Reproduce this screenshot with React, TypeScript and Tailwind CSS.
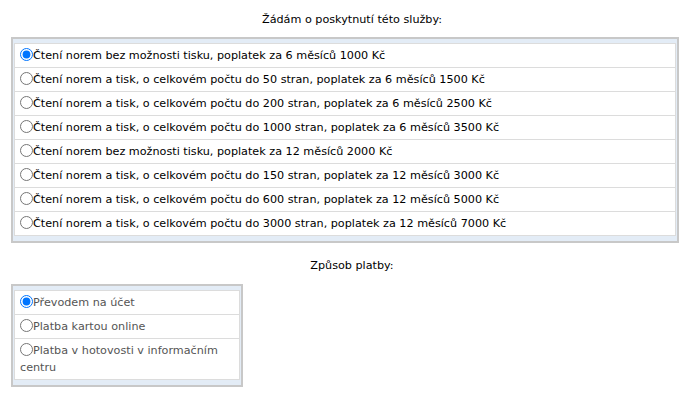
const SERVICES = [
  "Čtení norem bez možnosti tisku, poplatek za 6 měsíců 1000 Kč",
  "Čtení norem a tisk, o celkovém počtu do 50 stran, poplatek za 6 měsíců 1500 Kč",
  "Čtení norem a tisk, o celkovém počtu do 200 stran, poplatek za 6 měsíců 2500 Kč",
  "Čtení norem a tisk, o celkovém počtu do 1000 stran, poplatek za 6 měsíců 3500 Kč",
  "Čtení norem bez možnosti tisku, poplatek za 12 měsíců 2000 Kč",
  "Čtení norem a tisk, o celkovém počtu do 150 stran, poplatek za 12 měsíců 3000 Kč",
  "Čtení norem a tisk, o celkovém počtu do 600 stran, poplatek za 12 měsíců 5000 Kč",
  "Čtení norem a tisk, o celkovém počtu do 3000 stran, poplatek za 12 měsíců 7000 Kč",
];

const PAYMENTS = [
  "Převodem na účet",
  "Platba kartou online",
  "Platba v hotovosti v informačním centru",
];

function RadioList({
  name,
  items,
  textClass,
}: {
  name: string;
  items: string[];
  textClass: string;
}) {
  return (
    <div className="border-2 border-[#c8c8c8] bg-[#e3ecf6] px-px pt-[4px] pb-[5px]">
      <div className="border-x border-t border-[#dcdcdc] bg-white">
        {items.map((label, i) => (
          <label
            key={label}
            className={`block border-b border-[#dcdcdc] pl-[5px] pr-2 py-[3px] leading-[17px] ${textClass}`}
          >
            <input
              type="radio"
              name={name}
              defaultChecked={i === 0}
              className="m-0 inline-block h-[13px] w-[13px] align-[-2px]"
            />
            {label}
          </label>
        ))}
      </div>
    </div>
  );
}

export default function App() {
  return (
    <div
      className="w-[694px] h-[393px] bg-white text-[11.2px]"
      style={{ fontFamily: '"DejaVu Sans", sans-serif' }}
    >
      {/* Service */}
      <div className="pt-[11px] pl-[10px] text-center leading-[17px] text-black">
        Žádám o poskytnutí této služby:
      </div>
      <div className="ml-[11px] mt-[9px] w-[668px]">
        <RadioList name="service" items={SERVICES} textClass="text-black" />
      </div>

      {/* Payment */}
      <div className="mt-[14px] pl-[10px] text-center leading-[17px] text-black">
        Způsob platby:
      </div>
      <div className="ml-[11px] mt-[10px] w-[232px]">
        <RadioList name="payment" items={PAYMENTS} textClass="text-[#555]" />
      </div>
    </div>
  );
}
